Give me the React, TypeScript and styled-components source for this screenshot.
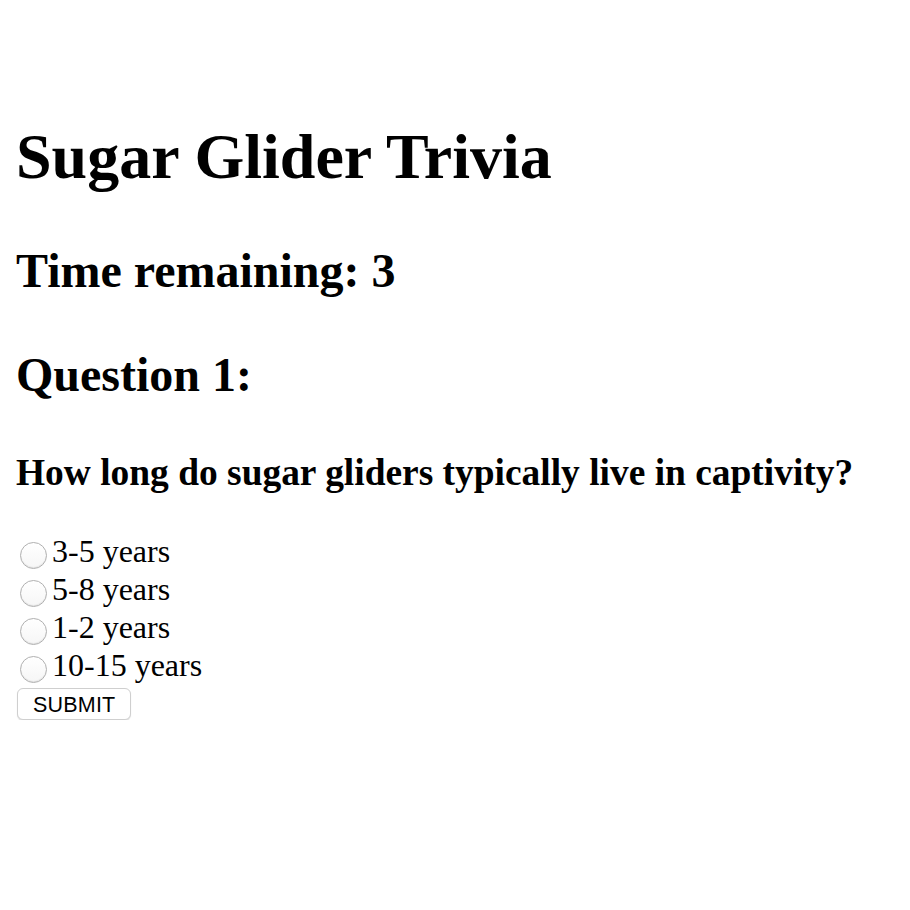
import React from "react";
import styled, { createGlobalStyle } from "styled-components";

const GlobalStyle = createGlobalStyle`
  html, body {
    margin: 0;
    padding: 0;
    background: #ffffff;
    color: #000000;
    font-family: "Liberation Serif", "Times New Roman", serif;
  }
`;

const Page = styled.div`
  display: flex;
  flex-direction: column;
  align-items: flex-start;
  padding: 125px 16px 0 16px;
`;

const Title = styled.h1`
  margin: 0;
  font-size: 64px;
  line-height: 64px;
  font-weight: bold;
  white-space: nowrap;
`;

const SubHeading = styled.h2<{ $gap: number }>`
  margin: ${(p) => p.$gap}px 0 0 0;
  font-size: 48px;
  line-height: 48px;
  font-weight: bold;
  white-space: nowrap;
`;

const QuestionText = styled.h3`
  margin: 55px 0 0 0;
  font-size: 37.44px;
  line-height: 37.44px;
  font-weight: bold;
  white-space: nowrap;
`;

const Options = styled.div`
  display: flex;
  flex-direction: column;
  margin-top: 44.5px;
`;

const OptionRow = styled.label`
  display: flex;
  align-items: center;
  height: 38px;
  font-size: 32px;
  line-height: 30px;
  white-space: nowrap;
`;

const OptionText = styled.span`
  margin-bottom: 8px;
`;

const Radio = styled.input`
  appearance: none;
  -webkit-appearance: none;
  box-sizing: border-box;
  width: 27px;
  height: 27px;
  margin: 6px 5px 5px 4px;
  border-radius: 50%;
  border: 1px solid #b0b0b0;
  background: linear-gradient(#ffffff, #f6f6f6);
  box-shadow: inset 0 -1px 1px rgba(0, 0, 0, 0.08);
  flex: none;
`;

const SubmitButton = styled.button`
  box-sizing: border-box;
  margin: 0 0 0 1px;
  height: 32px;
  padding: 0 15px;
  font-family: "Liberation Sans", Arial, sans-serif;
  font-size: 21.5px;
  line-height: 32px;
  color: #000000;
  background: #ffffff;
  border: 1px solid #cfcfcf;
  border-radius: 6px;
  box-shadow: 0 1px 1px rgba(0, 0, 0, 0.12);
  letter-spacing: 0.2px;
`;

const answers = ["3-5 years", "5-8 years", "1-2 years", "10-15 years"];

export default function App() {
  return (
    <>
      <GlobalStyle />
      <Page>
        <Title>Sugar Glider Trivia</Title>
        <SubHeading $gap={58}>Time remaining: 3</SubHeading>
        <SubHeading $gap={56}>Question 1:</SubHeading>
        <QuestionText>How long do sugar gliders typically live in captivity?</QuestionText>
        <Options>
          {answers.map((a) => (
            <OptionRow key={a}>
              <Radio type="radio" name="answer" value={a} />
              <OptionText>{a}</OptionText>
            </OptionRow>
          ))}
        </Options>
        <SubmitButton type="button">SUBMIT</SubmitButton>
      </Page>
    </>
  );
}
